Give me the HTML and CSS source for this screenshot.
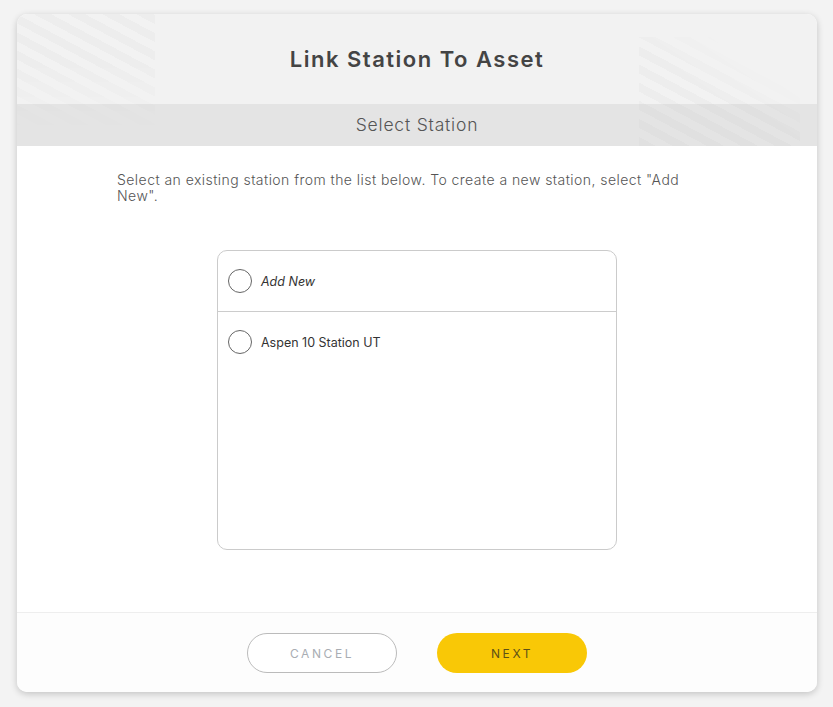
FILE: index.html
```html
<!DOCTYPE html>
<html lang="en">
<head>
  <meta charset="UTF-8">
  <title>Link Station To Asset</title>
  <link rel="stylesheet" href="styles.css">
</head>
<body>
  <div class="modal">
    <div class="modal-header">
      <div class="stripes stripes-left"></div>
      <div class="stripes stripes-right"></div>
      <h2>Link Station To Asset</h2>
      <div class="step-title">Select Station</div>
    </div>

    <div class="modal-body">
      <p class="hint">Select an existing station from the list below. To create a new station, select "Add New".</p>

      <ul class="station-list">
        <li class="station">
          <span class="radio"></span>
          <span class="label add-new">Add New</span>
        </li>
        <li class="station">
          <span class="radio"></span>
          <span class="label">Aspen 10 Station UT</span>
        </li>
      </ul>
    </div>

    <div class="modal-footer">
      <button class="btn btn-cancel">Cancel</button>
      <button class="btn btn-next">Next</button>
    </div>
  </div>
</body>
</html>
```

FILE: styles.css
```css
body {
  font-family: 'Inter', 'Open Sans', sans-serif;
  margin: 0;
  padding: 14px 16px 15px 17px;
  background: #f3f3f3;
  color: #444;
}

.modal {
  background: #fff;
  border-radius: 10px;
  box-shadow: 0 2px 7px rgba(0,0,0,0.2);
  overflow: hidden;
}

.modal-header {
  position: relative;
  background: #f2f2f2;
  text-align: center;
}

.stripes {
  position: absolute;
  background: repeating-linear-gradient(28deg, rgba(0,0,0,0.018) 0 8px, transparent 8px 16px);
  pointer-events: none;
}

.stripes-left {
  left: 0;
  top: 0;
  width: 138px;
  height: 118px;
  -webkit-mask-image: linear-gradient(to bottom, #000 40%, transparent);
}

.stripes-right {
  right: 17px;
  top: 23px;
  width: 161px;
  height: 109px;
  -webkit-mask-image: linear-gradient(to bottom left, transparent 25%, #000 55%);
}

h2 {
  position: relative;
  margin: 0;
  height: 90px;
  line-height: 90px;
  font-size: 22px;
  font-weight: 600;
  letter-spacing: 1.5px;
  color: #444;
}

.step-title {
  position: relative;
  background: rgba(0,0,0,0.055);
  height: 42px;
  line-height: 42px;
  font-size: 17.5px;
  font-weight: 300;
  letter-spacing: 0.8px;
  color: #555;
}

.modal-body {
  padding: 26px 100px 62px;
}

.hint {
  margin: 0 0 46px;
  font-size: 14px;
  line-height: 16px;
  letter-spacing: 0.45px;
  color: #555;
  font-weight: 300;
}

.station-list {
  list-style: none;
  margin: 0 auto;
  padding: 0;
  width: 398px;
  height: 298px;
  border: 1px solid #cbcbcb;
  border-radius: 10px;
}

.station {
  display: flex;
  align-items: center;
  gap: 9px;
  height: 60px;
  padding: 0 10px;
  border-bottom: 1px solid #ccc;
  font-size: 12.5px;
  color: #333;
}

.station:last-child {
  border-bottom: none;
}

.radio {
  width: 22px;
  height: 22px;
  border: 1px solid #666;
  border-radius: 50%;
}

.add-new {
  font-style: italic;
}

.modal-footer {
  display: flex;
  justify-content: center;
  gap: 40px;
  padding: 20px 0 19px;
  border-top: 1px solid #eee;
  background: #fdfdfd;
}

.btn {
  width: 150px;
  height: 40px;
  border-radius: 20px;
  font-family: inherit;
  font-size: 12px;
  letter-spacing: 2.6px;
  text-transform: uppercase;
  cursor: pointer;
}

.btn-cancel {
  background: #fff;
  border: 1px solid #bbb;
  color: #a9adb3;
}

.btn-next {
  background: #f9c806;
  border: none;
  color: #5e5116;
}
```
